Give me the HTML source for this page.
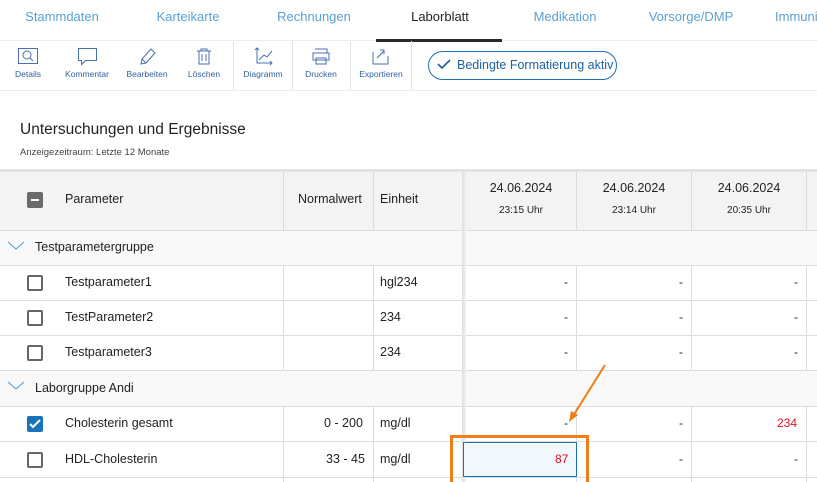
<!DOCTYPE html>
<html><head><style>
*{margin:0;padding:0;box-sizing:border-box}
body{width:817px;height:482px;overflow:hidden;background:#fff;font-family:"Liberation Sans",Arial,sans-serif;position:relative;color:#222}
.a{position:absolute;white-space:nowrap}
.tab{top:9px;font-size:13px;color:#5b9fd4;transform:translateX(-50%)}
.tb{top:69px;font-size:8.5px;color:#2f5fa0;transform:translateX(-50%)}
.sep{position:absolute;top:41px;width:1px;height:49px;background:#e3e3e3}
.hl{position:absolute;left:0;width:817px;height:1px;background:#dcdcdc}
.vl{position:absolute;width:1px;background:#dcdcdc}
.t{font-size:12.5px;color:#222}
.cb{position:absolute;width:16px;height:16px;border:2px solid #666;border-radius:2px;background:#fff}
.d{font-size:12px}
</style></head><body>
<!-- tabs -->
<div class="a tab" style="left:62px">Stammdaten</div>
<div class="a tab" style="left:188px">Karteikarte</div>
<div class="a tab" style="left:314px">Rechnungen</div>
<div class="a tab" style="left:440px;color:#222">Laborblatt</div>
<div class="a tab" style="left:565px">Medikation</div>
<div class="a tab" style="left:691px">Vorsorge/DMP</div>
<div class="a tab" style="left:775px;transform:none">Immuni</div>
<div class="hl" style="top:40px;background:#eee"></div>
<div class="a" style="left:376px;top:39px;width:126px;height:3px;background:#2a2a2a"></div>
<!-- toolbar -->
<svg class="a" style="left:0;top:44px" width="420" height="24" fill="none" stroke="#4a6fb0" stroke-width="1">
<rect x="18.5" y="4.5" width="19" height="15"/><circle cx="27" cy="11" r="4"/><line x1="30" y1="14" x2="33" y2="17"/>
<path d="M78.5 4.5h18v12h-11l-4 4v-4h-3z"/>
<path d="M141 20l1-5 9-10 4 4-9 10z M142 15l4 4"/>
<path d="M197 7h14 M201 7v-2h6v2 M199 7v13h10V7 M202 10v7 M206 10v7"/>
<path d="M257 4v15h15 M255 6l2-2 2 2 M270 17l2 2-2 2 M259 16l5-5 3 2 5-6"/>
<path d="M315 5h12v4 M313 9h16v7h-16z M316 14h10v6h-10z"/>
<path d="M373 8v12h15v-8 M377 14l7-7 M380 6h4v4"/>
</svg>
<div class="a tb" style="left:28px">Details</div>
<div class="a tb" style="left:87px">Kommentar</div>
<div class="a tb" style="left:147px">Bearbeiten</div>
<div class="a tb" style="left:204px">Löschen</div>
<div class="a tb" style="left:263px">Diagramm</div>
<div class="a tb" style="left:321px">Drucken</div>
<div class="a tb" style="left:381px">Exportieren</div>
<div class="sep" style="left:233px"></div>
<div class="sep" style="left:292px"></div>
<div class="sep" style="left:350px"></div>
<div class="sep" style="left:411px"></div>
<div class="a" style="left:428px;top:51px;width:189px;height:29px;border:1px solid #1f6fb2;border-radius:15px"></div>
<svg class="a" style="left:437px;top:58px" width="14" height="12" fill="none" stroke="#1f5fa0" stroke-width="1.6"><path d="M1 6l4 4 8-8"/></svg>
<div class="a" style="left:457px;top:58px;font-size:12.5px;color:#1f5fa0">Bedingte Formatierung aktiv</div>
<div class="hl" style="top:90px;background:#eee"></div>
<!-- title -->
<div class="a" style="left:20px;top:121px;font-size:15.5px;color:#222">Untersuchungen und Ergebnisse</div>
<div class="a" style="left:20px;top:147px;font-size:9.5px;color:#444">Anzeigezeitraum: Letzte 12 Monate</div>
<!-- table -->
<div class="a" style="left:0;top:169px;width:817px;height:3px;background:#e2e2e2"></div>
<div class="a" style="left:0;top:172px;width:817px;height:58px;background:#f3f3f3"></div>
<div class="a" style="left:0;top:230px;width:817px;height:35px;background:#f8f8f8"></div>
<div class="a" style="left:0;top:371px;width:817px;height:35px;background:#f8f8f8"></div>
<div class="hl" style="top:230px"></div>
<div class="hl" style="top:265px"></div>
<div class="hl" style="top:300px"></div>
<div class="hl" style="top:335px"></div>
<div class="hl" style="top:370px"></div>
<div class="hl" style="top:406px"></div>
<div class="hl" style="top:441px"></div>
<div class="hl" style="top:477px"></div>
<div class="vl" style="left:283px;top:172px;height:58px"></div>
<div class="vl" style="left:373px;top:172px;height:58px"></div>
<div class="vl" style="left:283px;top:265px;height:105px"></div>
<div class="vl" style="left:373px;top:265px;height:105px"></div>
<div class="vl" style="left:283px;top:406px;height:76px"></div>
<div class="vl" style="left:373px;top:406px;height:76px"></div>
<div class="a" style="left:462px;top:172px;width:4px;height:310px;background:linear-gradient(90deg,#ddd,#f3f3f3)"></div>
<div class="vl" style="left:576px;top:172px;height:58px"></div>
<div class="vl" style="left:691px;top:172px;height:58px"></div>
<div class="vl" style="left:806px;top:172px;height:58px"></div>
<div class="vl" style="left:576px;top:265px;height:105px"></div>
<div class="vl" style="left:691px;top:265px;height:105px"></div>
<div class="vl" style="left:806px;top:265px;height:105px"></div>
<div class="vl" style="left:576px;top:406px;height:76px"></div>
<div class="vl" style="left:691px;top:406px;height:76px"></div>
<div class="vl" style="left:806px;top:406px;height:76px"></div>
<!-- header -->
<div class="a" style="left:27px;top:192px;width:16px;height:16px;background:#6b6b6b;border-radius:2px"></div>
<div class="a" style="left:31px;top:199px;width:8px;height:2px;background:#fff"></div>
<div class="a t" style="left:65px;top:192px">Parameter</div>
<div class="a t" style="left:298px;top:192px">Normalwert</div>
<div class="a t" style="left:380px;top:192px">Einheit</div>
<div class="a" style="left:466px;top:181px;width:110px;text-align:center;font-size:12.5px">24.06.2024</div>
<div class="a" style="left:466px;top:205px;width:110px;text-align:center;font-size:10px">23:15 Uhr</div>
<div class="a" style="left:577px;top:181px;width:114px;text-align:center;font-size:12.5px">24.06.2024</div>
<div class="a" style="left:577px;top:205px;width:114px;text-align:center;font-size:10px">23:14 Uhr</div>
<div class="a" style="left:692px;top:181px;width:114px;text-align:center;font-size:12.5px">24.06.2024</div>
<div class="a" style="left:692px;top:205px;width:114px;text-align:center;font-size:10px">20:35 Uhr</div>
<!-- groups -->
<svg class="a" style="left:7px;top:241px" width="18" height="10" fill="none" stroke="#4a9ad8" stroke-width="1"><path d="M1 1l8 7 8-7"/></svg>
<div class="a t" style="left:35px;top:240px">Testparametergruppe</div>
<svg class="a" style="left:7px;top:381px" width="18" height="10" fill="none" stroke="#4a9ad8" stroke-width="1"><path d="M1 1l8 7 8-7"/></svg>
<div class="a t" style="left:35px;top:381px">Laborgruppe Andi</div>
<!-- rows -->
<div class="cb" style="left:27px;top:275px"></div><div class="a t" style="left:65px;top:275px">Testparameter1</div><div class="a t" style="left:380px;top:275px">hgl234</div>
<div class="cb" style="left:27px;top:310px"></div><div class="a t" style="left:65px;top:310px">TestParameter2</div><div class="a t" style="left:380px;top:310px">234</div>
<div class="cb" style="left:27px;top:345px"></div><div class="a t" style="left:65px;top:345px">Testparameter3</div><div class="a t" style="left:380px;top:345px">234</div>
<div class="a" style="left:27px;top:416px;width:16px;height:16px;background:#1a73b8;border-radius:2px"></div>
<svg class="a" style="left:29px;top:419px" width="12" height="10" fill="none" stroke="#fff" stroke-width="2"><path d="M1 5l3 3 7-7"/></svg>
<div class="a t" style="left:65px;top:416px">Cholesterin gesamt</div><div class="a t" style="left:324px;top:416px">0 - 200</div><div class="a t" style="left:380px;top:416px">mg/dl</div>
<div class="cb" style="left:27px;top:452px"></div><div class="a t" style="left:65px;top:452px">HDL-Cholesterin</div><div class="a t" style="left:326px;top:452px">33 - 45</div><div class="a t" style="left:380px;top:452px">mg/dl</div>
<!-- values -->
<div class="a d" style="left:564px;top:275px">-</div><div class="a d" style="left:679px;top:275px">-</div><div class="a d" style="left:794px;top:275px">-</div>
<div class="a d" style="left:564px;top:310px">-</div><div class="a d" style="left:679px;top:310px">-</div><div class="a d" style="left:794px;top:310px">-</div>
<div class="a d" style="left:564px;top:345px">-</div><div class="a d" style="left:679px;top:345px">-</div><div class="a d" style="left:794px;top:345px">-</div>
<div class="a d" style="left:564px;top:416px">-</div><div class="a d" style="left:679px;top:416px">-</div><div class="a d" style="left:777px;top:416px;color:#e01020">234</div>
<div class="a d" style="left:679px;top:452px">-</div><div class="a d" style="left:794px;top:452px">-</div>
<div class="a" style="left:463px;top:442px;width:114px;height:35px;background:#f2f7fb;border:1px solid #1f72b4"></div>
<div class="a d" style="left:555px;top:452px;color:#e01020">87</div>
<div class="a" style="left:450px;top:435px;width:139px;height:47px;border:3px solid #ef7d1a;border-bottom:none"></div>
<svg class="a" style="left:565px;top:362px" width="45" height="62"><line x1="40" y1="3" x2="8" y2="54" stroke="#ef7d1a" stroke-width="2"/><path d="M4 60l2-11 7 4z" fill="#ef7d1a"/></svg>
</body></html>
